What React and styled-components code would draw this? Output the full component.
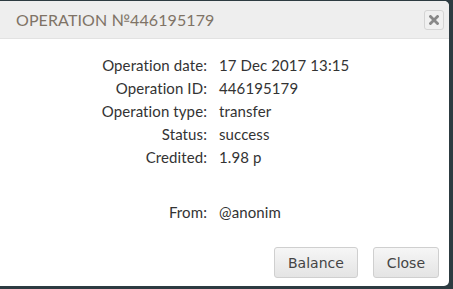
import React from 'react';
import styled, { createGlobalStyle } from 'styled-components';

const GlobalStyle = createGlobalStyle`
  html, body {
    margin: 0;
    padding: 0;
    background: #2d3b41;
  }
  body {
    width: 453px;
    height: 289px;
    overflow: hidden;
  }
`;

const Backdrop = styled.div`
  width: 453px;
  height: 289px;
  padding: 1px 4px 3px 0;
  box-sizing: border-box;
  background: #2d3b41;
`;

const Modal = styled.div`
  height: 100%;
  background: #fff;
  border-radius: 0 5px 5px 0;
  display: flex;
  flex-direction: column;
  overflow: hidden;
`;

const Header = styled.div`
  height: 37px;
  background: #eeeeee;
  border-bottom: 1px solid #e2e2e2;
  display: flex;
  align-items: center;
  justify-content: space-between;
  padding: 0 5px 0 16px;
`;

const Title = styled.h3`
  margin: 0;
  font-family: 'Lato', sans-serif;
  font-size: 16px;
  font-weight: 400;
  letter-spacing: 0.1px;
  color: #7f7366;
`;

const CloseX = styled.button`
  width: 20px;
  height: 20px;
  padding: 0;
  border: 1px solid #d4d4d4;
  border-radius: 3px;
  background: #f0f0f0;
  display: flex;
  align-items: center;
  justify-content: center;
  cursor: pointer;
`;

const Body = styled.div`
  flex: 1;
  padding: 15px 0 0;
  display: grid;
  grid-template-columns: 207px 1fr;
  align-content: start;
  column-gap: 12px;
  font-family: 'Lato', sans-serif;
  font-size: 15px;
  line-height: 23px;
  letter-spacing: 0.1px;
  color: #333;
`;

const Label = styled.div`
  text-align: right;
`;

const Value = styled.div``;

const Spacer = styled.div`
  grid-column: 1 / span 2;
  height: 32px;
`;

const Footer = styled.div`
  display: flex;
  justify-content: flex-end;
  gap: 15px;
  padding: 0 10px 8px 0;
`;

const Button = styled.button`
  height: 31px;
  padding: 0 13px;
  font-family: 'DejaVu Sans', Verdana, sans-serif;
  font-size: 14px;
  color: #444;
  border: 1px solid #cfcfcf;
  border-radius: 3px;
  background: linear-gradient(#f6f6f6, #e4e4e4);
  cursor: pointer;
`;

const rows = [
  ['Operation date:', '17 Dec 2017 13:15'],
  ['Operation ID:', '446195179'],
  ['Operation type:', 'transfer'],
  ['Status:', 'success'],
  ['Credited:', '1.98 p'],
];

const App = () => {
  return (
    <>
      <GlobalStyle />
      <Backdrop>
        <Modal>
          <Header>
            <Title>OPERATION №446195179</Title>
            <CloseX aria-label="close">
              <svg width="10" height="10" viewBox="0 0 10 10">
                <path d="M1.5 1.5 L8.5 8.5 M8.5 1.5 L1.5 8.5" stroke="#888" strokeWidth="2.8" strokeLinecap="square" />
              </svg>
            </CloseX>
          </Header>
          <Body>
            {rows.map(([label, value]) => (
              <React.Fragment key={label}>
                <Label>{label}</Label>
                <Value>{value}</Value>
              </React.Fragment>
            ))}
            <Spacer />
            <Label>From:</Label>
            <Value>@anonim</Value>
          </Body>
          <Footer>
            <Button>Balance</Button>
            <Button>Close</Button>
          </Footer>
        </Modal>
      </Backdrop>
    </>
  );
};

export default App;
